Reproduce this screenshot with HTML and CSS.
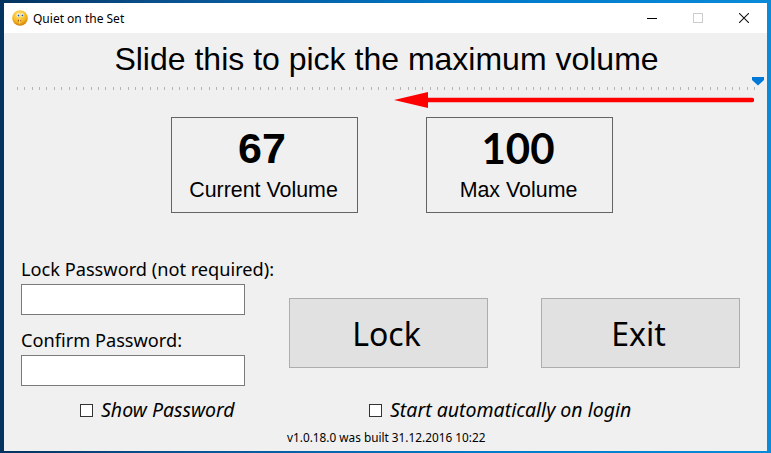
FILE: index.html
```html
<!DOCTYPE html>
<html lang="en">
<head>
<meta charset="utf-8">
<title>Quiet on the Set</title>
<link rel="stylesheet" href="styles.css">
</head>
<body>
<div class="window">
  <header class="titlebar">
    <svg class="app-icon" width="16" height="16" viewBox="0 0 16 16">
      <defs>
        <radialGradient id="face" cx="0.45" cy="0.3" r="0.75">
          <stop offset="0" stop-color="#ffe680"/>
          <stop offset="0.6" stop-color="#f5b81e"/>
          <stop offset="1" stop-color="#c9720c"/>
        </radialGradient>
      </defs>
      <circle cx="8" cy="8" r="7.8" fill="url(#face)"/>
      <ellipse cx="6.2" cy="5.2" rx="1.6" ry="1.9" fill="#fff"/>
      <ellipse cx="10.2" cy="5" rx="1.5" ry="1.8" fill="#fff"/>
      <circle cx="6.5" cy="5.5" r="0.9" fill="#1c55b0"/>
      <circle cx="10.4" cy="5.3" r="0.9" fill="#1c55b0"/>
      <ellipse cx="7.5" cy="10.6" rx="1.6" ry="1.2" fill="#9a3d10"/>
      <rect x="6.9" y="8.6" width="1.5" height="5" rx="0.7" fill="#fbdc80"/>
    </svg>
    <span class="title">Quiet on the Set</span>
    <div class="controls">
      <span class="ctl"><svg width="10" height="10" viewBox="0 0 10 10"><path d="M0 5.5H10" stroke="#000"/></svg></span>
      <span class="ctl"><svg width="10" height="10" viewBox="0 0 10 10"><rect x="0.5" y="0.5" width="9" height="9" fill="none" stroke="#ccc"/></svg></span>
      <span class="ctl"><svg width="10" height="10" viewBox="0 0 10 10"><path d="M0 0L10 10M10 0L0 10" stroke="#111" stroke-width="1.05"/></svg></span>
    </div>
  </header>
  <main class="content">
    <h1 class="heading">Slide this to pick the maximum volume</h1>
    <div class="slider">
      <svg class="thumb" width="12" height="9" viewBox="0 0 12 9"><path d="M0 0H12V3L6 8.5L0 3Z" fill="#0078d7"/></svg>
    </div>
    <svg class="arrow" width="360" height="18" viewBox="0 0 360 18">
      <path d="M0 9L34 1V6.8H358a2.2 2.2 0 0 1 0 4.4H34V17Z" fill="#ff0000"/>
    </svg>
    <section class="stats">
      <div class="stat"><div class="stat-value">67</div><div class="stat-label">Current Volume</div></div>
      <div class="stat"><div class="stat-value stat-value-alt">100</div><div class="stat-label">Max Volume</div></div>
    </section>
    <section class="form">
      <div class="fields">
        <label class="field-label">Lock Password (not required):</label>
        <div class="input"></div>
        <label class="field-label field-label-second">Confirm Password:</label>
        <div class="input"></div>
      </div>
      <div class="actions">
        <button class="btn">Lock</button>
        <button class="btn">Exit</button>
      </div>
    </section>
    <section class="options">
      <div class="check check-show"><span class="box"></span><span>Show Password</span></div>
      <div class="check check-start"><span class="box"></span><span>Start automatically on login</span></div>
    </section>
    <footer class="build">v1.0.18.0 was built 31.12.2016 10:22</footer>
  </main>
</div>
</body>
</html>
```
FILE: styles.css
```css
* { box-sizing: border-box; }
html, body { margin: 0; padding: 0; }
body { width: 771px; height: 453px; overflow: hidden; background: #0a86d4; }

.window {
  width: 771px;
  height: 453px;
  padding: 3px 4px 2px 4px;
  background: linear-gradient(90deg, #04335f 0, #0a4f8c 20%, #0078c8 60%, #0a8ad8 100%);
  display: flex;
  flex-direction: column;
}

.titlebar {
  height: 30px;
  flex: none;
  background: #fff;
  display: flex;
  align-items: center;
  padding-left: 8px;
}
.app-icon { flex: none; }
.title {
  margin-left: 5px;
  font: 12px "Noto Sans", "Open Sans", sans-serif;
  color: #000;
}
.controls { margin-left: auto; display: flex; }
.ctl {
  width: 46px;
  height: 30px;
  display: flex;
  align-items: center;
  justify-content: center;
}
.ctl svg { display: block; }

.content {
  position: relative;
  flex: 1;
  background: #f0f0f0;
  color: #000;
  display: flex;
  flex-direction: column;
}

.heading {
  margin: 6px 0 0 2px;
  height: 41px;
  text-align: center;
  font: 400 32px/40px "Liberation Sans", Arial, sans-serif;
}

.slider {
  position: relative;
  margin: 7px 9px 0 13px;
  height: 3px;
  flex: none;
  background: repeating-linear-gradient(90deg, #b4b4b4 0, #b4b4b4 1px, transparent 1px, transparent 7.37px);
}
.thumb { position: absolute; top: -10px; right: -6px; display: block; }
.arrow { position: absolute; left: 390px; top: 58px; display: block; }

.stats {
  margin: 27px 0 0 167px;
  display: flex;
  gap: 68px;
  flex: none;
}
.stat {
  width: 187px;
  height: 96px;
  border: 1px solid #646464;
  text-align: center;
}
.stat-value {
  margin: 4px 5px 0 0;
  font: 700 43px/52px "Liberation Sans", Arial, sans-serif;
}
.stat-value-alt { margin-right: 3px; font-family: "Lato", "Open Sans", sans-serif; font-size: 42px; }
.stat-label {
  margin: 3px 2px 0 0;
  font: 400 21.4px/26px "Liberation Sans", Arial, sans-serif;
}

.form {
  margin: 44px 0 0 17px;
  display: flex;
  flex: none;
}
.fields { width: 224px; flex: none; }
.field-label {
  display: block;
  font: 400 18.2px/25px "Noto Sans", "Open Sans", sans-serif;
  white-space: nowrap;
}
.field-label-second { margin-top: 13px; }
.input {
  margin-top: 2px;
  height: 31px;
  background: #fff;
  border: 1px solid #7a7a7a;
}
.actions {
  margin: 41px 0 0 44px;
  display: flex;
  gap: 53px;
}
.btn {
  width: 199px;
  height: 70px;
  padding: 0 4px 0 0;
  background: #e1e1e1;
  border: 1px solid #adadad;
  color: #000;
  font: 400 32px "Noto Sans", "Open Sans", sans-serif;
}

.options {
  margin-top: 12px;
  display: flex;
  flex: none;
}
.check {
  display: flex;
  align-items: center;
  gap: 8px;
  font: italic 400 19.5px/24px "Noto Sans", "Open Sans", sans-serif;
  white-space: nowrap;
}
.check-show { margin-left: 76px; width: 289px; }
.box {
  width: 13px;
  height: 13px;
  flex: none;
  background: #fff;
  border: 1px solid #333;
}

.build {
  margin-top: 7px;
  padding-left: 283px;
  font: 400 11.8px/16px "Noto Sans", "Open Sans", sans-serif;
}
```
